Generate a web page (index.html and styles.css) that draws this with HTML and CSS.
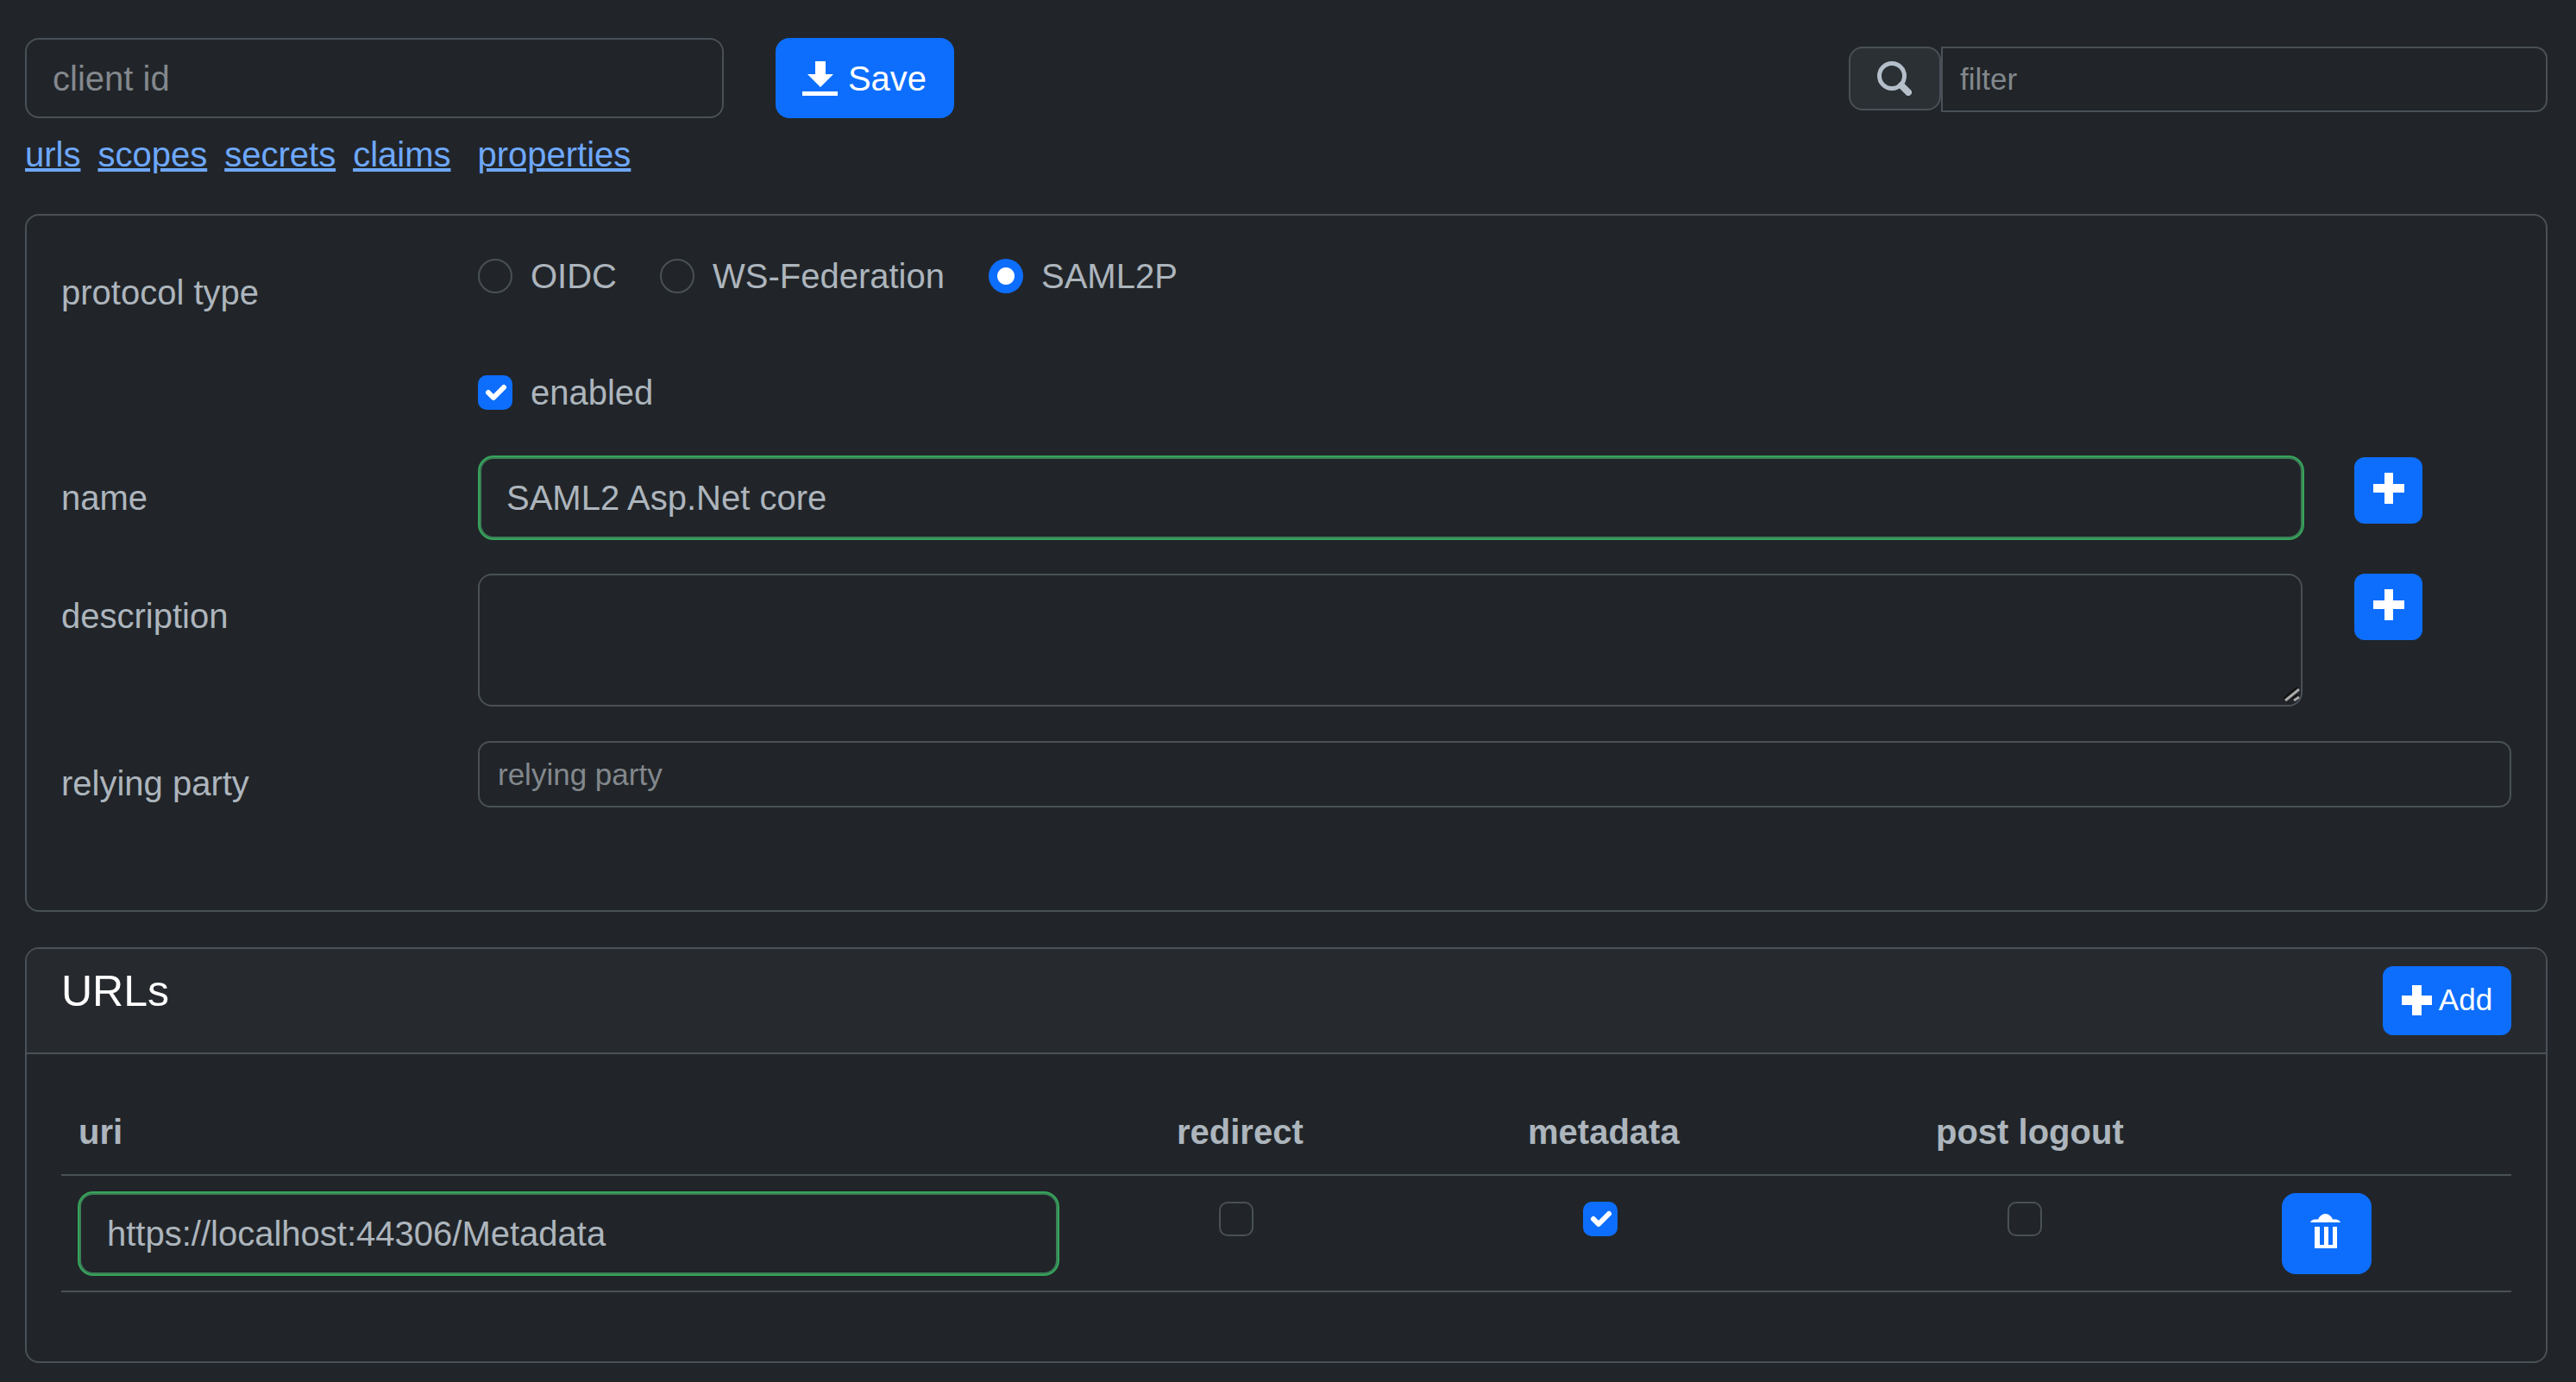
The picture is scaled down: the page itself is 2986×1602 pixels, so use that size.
FILE: index.html
```html
<!DOCTYPE html>
<html lang="en">
  <head>
    <meta charset="UTF-8" />
    <meta name="viewport" content="width=device-width, initial-scale=1.0" />
    <title>Client</title>
    <link rel="stylesheet" href="styles.css">
  </head>
  <body>
    <!-- Top bar -->
    <div class="top-row">
      <input type="text" class="field client-input" placeholder="client id" />
      <button class="btn save-btn">
        <svg class="save-icon" viewBox="0 0 41 40"><rect x="0" y="35" width="41" height="5" fill="#fff"/><polygon points="15,0 27,0 27,15 36,15 21,30 6,15 15,15" fill="#fff"/></svg>
        Save
      </button>
      <div class="search-group">
        <span class="search-addon">
          <svg class="search-icon" viewBox="0 0 40 40"><circle cx="17" cy="17" r="14.5" fill="none" stroke="#b4bfca" stroke-width="5"/><line x1="28" y1="28" x2="36" y2="36" stroke="#b4bfca" stroke-width="8" stroke-linecap="round"/></svg>
        </span>
        <input type="text" class="field filter-input" placeholder="filter" />
      </div>
    </div>

    <div class="nav-links">
      <a href="#urls">urls</a>
      <a href="#scopes">scopes</a>
      <a href="#secrets">secrets</a>
      <a href="#claims">claims</a>
      <a href="#properties" class="link-last">properties</a>
    </div>

    <!-- Main settings -->
    <div class="card settings-card">
      <div class="form-row protocol-row">
        <div class="row-label">protocol type</div>
        <div class="choice-line">
          <label class="choice oidc-choice"><input type="radio" name="protocol" />OIDC</label>
          <label class="choice ws-choice"><input type="radio" name="protocol" />WS-Federation</label>
          <label class="choice"><input type="radio" name="protocol" checked />SAML2P</label>
        </div>
      </div>

      <div class="form-row enabled-row">
        <div></div>
        <label class="choice"><input type="checkbox" checked />enabled</label>
      </div>

      <div class="form-row name-row">
        <div class="row-label">name</div>
        <div class="control-line">
          <input type="text" class="field big-field valid" value="SAML2 Asp.Net core" />
          <button class="btn plus-btn">
            <svg class="plus-icon" viewBox="0 0 36 36"><path d="M13 0h10v13h13v10H23v13H13V23H0V13h13z" fill="#fff"/></svg>
          </button>
        </div>
      </div>

      <div class="form-row description-row">
        <div class="row-label">description</div>
        <div class="control-line">
          <div class="textarea-wrap">
            <textarea class="field description-input"></textarea>
            <svg class="resize-grip" viewBox="0 0 22 22">
              <path d="M2 15L18 2M12 15L18 11" fill="none" stroke="#111" stroke-width="5"/>
              <path d="M3 16L19 3M13 16L19 12" fill="none" stroke="#a9a9a9" stroke-width="3"/>
            </svg>
          </div>
          <button class="btn plus-btn">
            <svg class="plus-icon" viewBox="0 0 36 36"><path d="M13 0h10v13h13v10H23v13H13V23H0V13h13z" fill="#fff"/></svg>
          </button>
        </div>
      </div>

      <div class="form-row relying-row">
        <div class="row-label">relying party</div>
        <input type="text" class="field relying-input" placeholder="relying party" />
      </div>
    </div>

    <!-- URLs -->
    <div class="card urls-card">
      <div class="card-header">
        <div class="card-title">URLs</div>
        <button class="btn add-btn">
          <svg class="add-icon" viewBox="0 0 35 35"><path d="M12 0h11v12h12v11H23v12H12V23H0V12h12z" fill="#fff"/></svg>
          Add
        </button>
      </div>
      <table class="urls-table">
        <colgroup>
          <col class="col-uri" />
          <col class="col-redirect" />
          <col class="col-metadata" />
          <col class="col-logout" />
          <col class="col-action" />
        </colgroup>
        <thead>
          <tr>
            <th>uri</th>
            <th>redirect</th>
            <th>metadata</th>
            <th>post logout</th>
            <th></th>
          </tr>
        </thead>
        <tbody>
          <tr>
            <td class="uri-cell"><input type="text" class="field uri-input valid" value="https://localhost:44306/Metadata" /></td>
            <td class="check-cell redirect-cell"><input type="checkbox" /></td>
            <td class="check-cell metadata-cell"><input type="checkbox" checked /></td>
            <td class="check-cell logout-cell"><input type="checkbox" /></td>
            <td class="action-cell">
              <button class="btn trash-btn">
                <svg class="trash-icon" viewBox="0 0 35 40"><path d="M0 10Q1 7 5 6.5H9Q12 0 17.5 0T26 6.5H30Q34 7 35 10Z" fill="#fff"/><path d="M5 15H11V36H16V15H21V36H26V15H31V40H5Z" fill="#fff"/></svg>
              </button>
            </td>
          </tr>
        </tbody>
      </table>
    </div>
  </body>
</html>
```

FILE: styles.css
```css
* {
  box-sizing: border-box;
}

body {
  background-color: #212529;
  color: #adb5bd;
  font-family: "Liberation Sans", Arial, sans-serif;
  font-size: 40px;
  line-height: 60px;
  margin: 0;
  padding: 44px 33px 0 29px;
}

/* inputs */
.field {
  background-color: #212529;
  border: 2px solid #495057;
  border-radius: 16px;
  color: #adb5bd;
  font-family: inherit;
  font-size: 40px;
  outline: none;
}

.field::placeholder {
  color: #83888d;
}

.valid {
  border-color: #3a7f56;
  box-shadow: 0 0 0 2px #36a45a;
}

.client-input {
  width: 810px;
  height: 93px;
  margin-right: 60px;
  padding: 2px 30px 0;
}

.filter-input {
  width: 703px;
  height: 76px;
  padding: 0 20px;
  font-size: 35px;
  border-radius: 0 14px 14px 0;
}

.big-field {
  width: 2113px;
  height: 94px;
  margin: 2px 0 0 2px;
  padding: 0 29px;
}

.textarea-wrap {
  position: relative;
}

.description-input {
  display: block;
  width: 2115px;
  height: 154px;
  padding: 14px 30px;
  resize: none;
}

.resize-grip {
  position: absolute;
  right: 1px;
  bottom: 1px;
  width: 22px;
  height: 22px;
}

.relying-input {
  width: 2357px;
  height: 77px;
  padding: 0 21px;
  font-size: 35px;
  border-radius: 14px;
}

.uri-input {
  display: block;
  width: 1134px;
  height: 94px;
  padding: 0 30px;
}

/* buttons */
.btn {
  background-color: #0d6efd;
  border: none;
  color: white;
  font-family: inherit;
  display: flex;
  align-items: center;
  justify-content: center;
  cursor: pointer;
}

.save-btn {
  width: 207px;
  height: 93px;
  gap: 12px;
  padding: 2px 1px 0 0;
  font-size: 40px;
  border-radius: 16px;
}

.save-icon {
  width: 41px;
  height: 40px;
  margin-bottom: 2px;
}

.plus-btn {
  width: 79px;
  height: 77px;
  margin-left: 60px;
  border-radius: 12px;
  padding-bottom: 6px;
}

.name-row .plus-btn {
  margin-top: 2px;
}

.plus-icon {
  width: 36px;
  height: 36px;
}

.add-btn {
  width: 149px;
  height: 80px;
  gap: 8px;
  padding: 0 0 2px;
  font-size: 35px;
  border-radius: 12px;
}

.add-icon {
  width: 35px;
  height: 35px;
}

.trash-btn {
  width: 104px;
  height: 94px;
  border-radius: 16px;
}

.trash-icon {
  width: 35px;
  height: 40px;
  margin: 0 3px 6px 0;
}

/* top bar */
.top-row {
  display: flex;
  align-items: flex-start;
}

.search-group {
  display: flex;
  align-items: flex-start;
  margin-left: auto;
  margin-top: 10px;
}

.search-addon {
  display: flex;
  align-items: center;
  justify-content: center;
  width: 107px;
  height: 74px;
  background-color: #2b3035;
  border: 2px solid #495057;
  border-radius: 16px;
}

.search-icon {
  width: 40px;
  height: 40px;
  margin-right: 2px;
}

.nav-links {
  display: flex;
  gap: 20px;
  margin-top: 12px;
  margin-bottom: 39px;
}

.nav-links a {
  color: #6ea8fe;
  text-decoration: underline;
}

.nav-links .link-last {
  margin-left: 11px;
}

/* cards */
.card {
  border: 2px solid #495057;
  border-radius: 16px;
}

.settings-card {
  padding: 40px 40px 117px;
  margin-bottom: 41px;
}

.form-row {
  display: grid;
  grid-template-columns: 483px 1fr;
}

.row-label {
  padding-top: 19px;
}

.protocol-row {
  margin-bottom: 56px;
}

.enabled-row {
  margin-bottom: 43px;
}

.name-row {
  margin-bottom: 41px;
}

.description-row {
  margin-bottom: 40px;
}

.control-line {
  display: flex;
  align-items: flex-start;
}

.choice-line {
  display: flex;
}

.choice {
  display: flex;
  align-items: center;
  height: 60px;
}

.oidc-choice {
  margin-right: 50px;
}

.ws-choice {
  margin-right: 51px;
}

input[type="radio"],
input[type="checkbox"] {
  appearance: none;
  width: 40px;
  height: 40px;
  margin: 0;
  background-color: #212529;
  border: 2px solid #495057;
}

.choice input {
  margin-right: 21px;
}

input[type="radio"] {
  border-radius: 50%;
}

input[type="radio"]:checked {
  border: none;
  background: radial-gradient(circle, white 0, white 9.5px, #0d6efd 10.5px);
}

input[type="checkbox"] {
  border-radius: 10px;
}

input[type="checkbox"]:checked {
  border: none;
  background-color: #0d6efd;
  background-image: url("data:image/svg+xml,%3csvg xmlns='http://www.w3.org/2000/svg' viewBox='0 0 20 20'%3e%3cpath fill='none' stroke='%23fff' stroke-linecap='round' stroke-linejoin='round' stroke-width='3' d='M6 10l3 3l6-6'/%3e%3c/svg%3e");
  background-size: 100% 100%;
}

/* urls card */
.card-header {
  display: flex;
  justify-content: space-between;
  align-items: flex-start;
  background-color: #262a2f;
  border-bottom: 2px solid #495057;
  border-radius: 14px 14px 0 0;
  padding: 20px 40px 20px;
}

.card-title {
  color: white;
  font-size: 50px;
  line-height: 58px;
}

.urls-table {
  table-layout: fixed;
  border-collapse: collapse;
  width: 2840px;
  margin: 60px 0 80px 40px;
}

.col-uri { width: 1273px; }
.col-redirect { width: 407px; }
.col-metadata { width: 473px; }
.col-logout { width: 401px; }
.col-action { width: 286px; }

.urls-table th {
  text-align: left;
  vertical-align: bottom;
  padding: 0 20px 19px;
  height: 80px;
  border-bottom: 2px solid #495057;
}

.urls-table td {
  vertical-align: top;
  height: 135px;
  padding: 0;
  border-bottom: 2px solid #495057;
}

.urls-table .uri-cell {
  padding: 20px 0 0 21px;
}

.urls-table .check-cell {
  padding-top: 26px;
}

.urls-table .redirect-cell {
  padding-left: 69px;
}

.urls-table .metadata-cell {
  padding-left: 84px;
}

.urls-table .logout-cell {
  padding-left: 103px;
}

.urls-table .action-cell {
  padding: 20px 0 0 20px;
}
```
